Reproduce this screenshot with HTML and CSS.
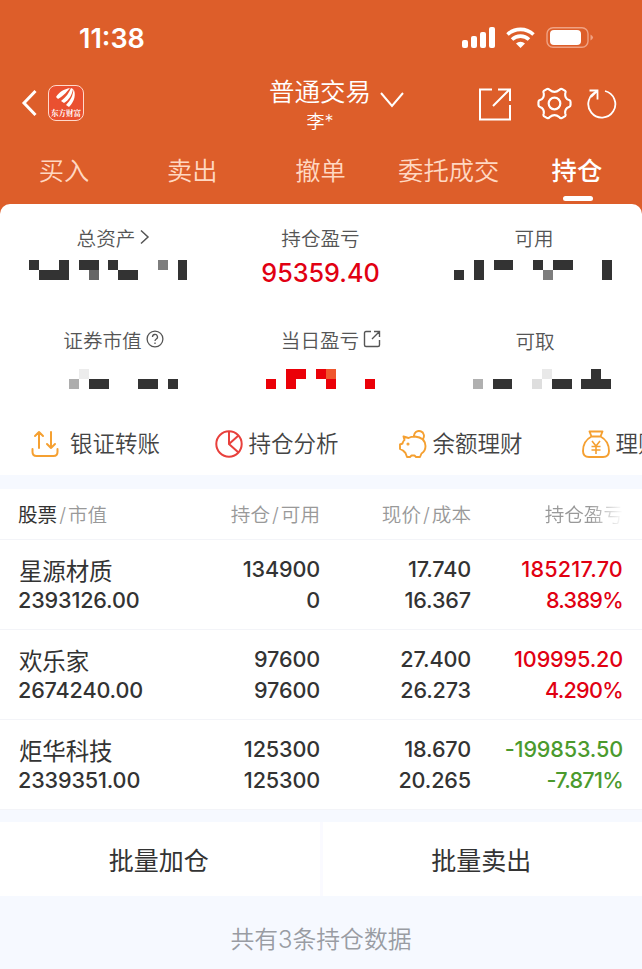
FILE: index.html
```html
<!DOCTYPE html>
<html lang="zh-CN">
<head>
  <meta charset="UTF-8" />
  <meta name="viewport" content="width=device-width, initial-scale=1.0" />
  <title>普通交易 - 持仓</title>
  <link rel="stylesheet" href="styles.css">
</head>
<body>
  <header class="header">
    <div class="status-bar">
      <span class="time">11:38</span>
      <svg class="status-icons" width="134" height="24" viewBox="0 0 134 24">
        <g fill="#fff">
          <rect x="2" y="13" width="6" height="8" rx="2"/>
          <rect x="11" y="9" width="6" height="12" rx="2"/>
          <rect x="20" y="5" width="6" height="16" rx="2"/>
          <rect x="29" y="0" width="6" height="21" rx="2"/>
          <path d="M60.500 21l-4.500-4.500a6.500 6.500 0 0 1 9 0z"/>
          <rect x="90" y="3" width="31" height="15" rx="4"/>
        </g>
        <path d="M47.500 7.500a19 19 0 0 1 26 0M52 12.500a12.500 12.500 0 0 1 17 0" fill="none" stroke="#fff" stroke-width="3.600"/>
        <rect x="87" y="0.700" width="41" height="19.600" rx="6" fill="none" stroke="#f0a283" stroke-width="1.400"/>
        <path d="M130.500 7.500q5 3 0 6z" fill="#f0a283"/>
      </svg>
    </div>

    <div class="nav-bar">
      <div class="nav-left">
        <svg width="18" height="28" viewBox="0 0 18 28"><path d="M15.500 2L4 14l11.500 12" fill="none" stroke="#fff" stroke-width="3"/></svg>
        <div class="logo">
          <svg width="20" height="19" viewBox="0 0 20 19" fill="#fff">
            <path d="M0 9C3 4 8 1 14 0 11 3 9 7 2 11z"/>
            <path d="M5 13C10 9 13 5 15 0l2 1C16 7 13 12 8 15z"/>
            <path d="M10 17C15 12 17 7 17.500 1 20 6 19 13 13 19z"/>
          </svg>
          <span class="logo-text">东方财富</span>
        </div>
      </div>
      <div class="nav-title">
        <div class="title">普通交易</div>
        <div class="account">李*</div>
      </div>
      <svg class="title-arrow" width="26" height="18" viewBox="0 0 26 18"><path d="M2 2l11 13L24 2" fill="none" stroke="#fff" stroke-width="2"/></svg>
      <div class="nav-right">
        <svg width="34" height="34" viewBox="0 0 34 34" fill="none" stroke="#fff" stroke-width="2"><path d="M14 2.500H2v30h30V18M15 19L31 3M20 2.500h12V14"/></svg>
        <svg class="gear" width="35" height="35" viewBox="0 0 36 36" fill="none" stroke="#fff" stroke-width="2.200" stroke-linejoin="round">
          <path d="M10.500 3Q12 2.500 13 4 18 8 23 4 24 2.500 25.500 3L29 5Q30 6 29 8 28.500 13 33 14.500 34.500 15 34.500 16.500V19.500Q34.500 21 33 21.500 28.500 23 29 28 30 30 29 31L25.500 33Q24 33.500 23 32 18 28 13 32 12 33.500 10.500 33L7 31Q6 30 7 28 7.500 23 3 21.500 1.500 21 1.500 19.500V16.500Q1.500 15 3 14.500 7.500 13 7 8 6 6 7 5z"/>
          <circle cx="18" cy="18" r="6"/>
        </svg>
        <svg width="32" height="32" viewBox="0 0 32 32" fill="none" stroke="#fff" stroke-width="1.800"><path d="M19 3A13.500 13.500 0 1 1 11 3.500M3.500 2.500H11.500v9M11 3l-6 6"/></svg>
      </div>
    </div>

    <nav class="tabs">
      <a class="tab">买入</a>
      <a class="tab">卖出</a>
      <a class="tab">撤单</a>
      <a class="tab">委托成交</a>
      <a class="tab active">持仓</a>
    </nav>
  </header>

  <section class="summary">
    <div class="summary-grid">
      <div class="cell">
        <div class="label assets">总资产<svg width="11" height="16" viewBox="0 0 11 16"><path d="M2 1.500l7 6.500-7 6.500" fill="none" stroke="#555" stroke-width="1.500"/></svg></div>
        <svg class="mosaic" width="158" height="20" viewBox="0 0 158 20" fill="#333">
          <path d="M0 0h10v10h20V0h10v20H10V10H0zM50 0h20v10H50zM79 0h10v10h20v10H89V10H79zM149 0h9v20h-9z"/>
          <path d="M60 10h10v10H60z" fill="#666"/><path d="M129 0h10v10h-10z" fill="#7d7d7d"/>
        </svg>
      </div>
      <div class="cell">
        <div class="label">持仓盈亏</div>
        <div class="value up">95359.40</div>
      </div>
      <div class="cell">
        <div class="label">可用</div>
        <svg class="mosaic shift-available" width="160" height="20" viewBox="0 0 160 20" fill="#333">
          <path d="M0 10h10v10H0zM20 0h10v20H20zM40 0h19v10H40zM79 0h10v10H79zM99 0h20v10H99zM148 0h10v20h-10z"/>
          <path d="M89 10h10v10H89z" fill="#7d7d7d"/>
        </svg>
      </div>
      <div class="cell second">
        <div class="label market">证券市值<svg width="18" height="18" viewBox="0 0 18 18" fill="none" stroke="#555" stroke-width="1.300"><circle cx="9" cy="9" r="7.900"/><path d="M6.500 7a2.500 2.500 0 1 1 3.600 2.200Q9 9.800 9 11M9 12.500V14"/></svg></div>
        <svg class="mosaic shift-market" width="109" height="20" viewBox="0 0 109 20" fill="#333">
          <path d="M20 10h20v10H20zM69 10h20v10H69zM99 10h10v10H99z"/>
          <path d="M0 10h10v10H0z" fill="#adadad"/><path d="M10 0h10v10H10z" fill="#ececec"/>
        </svg>
      </div>
      <div class="cell second">
        <div class="label today">当日盈亏<svg width="18" height="18" viewBox="0 0 18 18" fill="none" stroke="#555" stroke-width="1.400"><path d="M8 1.500H3Q1.500 1.500 1.500 3v12Q1.500 16.500 3 16.500h12q1.500 0 1.500-1.500v-5M9 9l7-7M11 1.500h5.500V7"/></svg></div>
        <svg class="mosaic" width="110" height="20" viewBox="0 0 110 20" fill="#eb0008">
          <path d="M0 10h10v10H0zM20 0h20v10H30v10H20zM50 0h10v10h10v10H60V10H50zM99 10h10v10H99z"/>
          <path d="M60 0h10v10H60z" fill="#f0562d"/>
        </svg>
      </div>
      <div class="cell second">
        <div class="label low">可取</div>
        <svg class="mosaic shift-cash" width="138" height="20" viewBox="0 0 138 20" fill="#333">
          <path d="M20 10h19v10H20zM79 10h20v10H79zM108 10h10V0h10v10h10v10h-30z"/>
          <path d="M0 10h10v10H0z" fill="#b0b0b0"/><path d="M59 10h10v10H59z" fill="#dedede"/><path d="M69 0h10v10H69z" fill="#e9e9e9"/>
        </svg>
      </div>
    </div>

    <div class="shortcuts">
      <a class="shortcut transfer">
        <svg width="28" height="28" viewBox="0 0 28 28" fill="none" stroke="#f5a031" stroke-width="2" stroke-linecap="round" stroke-linejoin="round"><path d="M1.500 19v3q0 4 4 4h17q4 0 4-4v-3M8 18V2M4 6l4-4 4 4M20 2v16M16 14l4 4 4-4"/></svg>
        银证转账
      </a>
      <a class="shortcut">
        <svg width="28" height="28" viewBox="0 0 28 28" fill="none" stroke="#e8403c" stroke-width="2"><circle cx="14" cy="14" r="12.700"/><path d="M14 1.500V14l9.500 8.500M14 14l9.500-8.500"/></svg>
        持仓分析
      </a>
      <a class="shortcut">
        <svg width="28" height="28" viewBox="0 0 28 28" fill="none" stroke="#f5a031" stroke-width="1.900" stroke-linejoin="round"><path d="M4.500 6.500l5 1.500Q12 6.500 16 6.500q10 1 10.500 9.500 0 5-4 7.500L21 27h-4l-1.500-1.500h-3L11 27H8l-1.500-4-2.500-2.500-3-1.500v-4.500l2.500-1Q4 11 5.500 10zM15 6.500a5 5 0 1 1 8.500 3"/><circle cx="9" cy="14" r="0.600"/></svg>
        余额理财
      </a>
      <a class="shortcut">
        <svg width="28" height="28" viewBox="0 0 28 28" fill="none" stroke="#f5a031" stroke-width="1.900" stroke-linejoin="round"><path d="M7.500 1.500h13l-2 5h-9zM9.500 6.500Q1 11 1 21q0 6 6 6h14q6 0 6-6 0-10-8.500-14.500"/><path d="M10 11l4 5 4-5M9.500 16.500h9M9.500 20h9M14 16v8" stroke-width="1.600"/></svg>
        理财
      </a>
    </div>
  </section>

  <section class="positions">
    <div class="row row-head">
      <div><b>股票</b><i>/</i>市值</div>
      <div>持仓<i>/</i>可用</div>
      <div>现价<i>/</i>成本</div>
      <div class="fade">持仓盈亏</div>
    </div>
    <div class="row">
      <div><span class="name">星源材质</span><span>2393126.00</span></div>
      <div><span>134900</span><span>0</span></div>
      <div><span>17.740</span><span>16.367</span></div>
      <div class="up"><span class="profit">185217.70</span><span class="percent">8.389%</span></div>
    </div>
    <div class="row">
      <div><span class="name">欢乐家</span><span>2674240.00</span></div>
      <div><span>97600</span><span>97600</span></div>
      <div><span>27.400</span><span>26.273</span></div>
      <div class="up"><span>109995.20</span><span class="percent">4.290%</span></div>
    </div>
    <div class="row">
      <div><span class="name">炬华科技</span><span>2339351.00</span></div>
      <div><span>125300</span><span>125300</span></div>
      <div><span>18.670</span><span>20.265</span></div>
      <div class="down"><span>-199853.50</span><span class="percent">-7.871%</span></div>
    </div>
  </section>

  <div class="actions">
    <button class="action">批量加仓</button>
    <button class="action">批量卖出</button>
  </div>

  <footer class="footer">共有3条持仓数据</footer>
</body>
</html>
```
FILE: styles.css
```css
* {
  box-sizing: border-box;
}
body {
  margin: 0;
  background: #f6f9ff;
  color: #333;
  font-family: Inter, "Noto Sans CJK SC", sans-serif;
  overflow: hidden;
}
svg {
  display: block;
  flex: none;
}
.header {
  height: 214px;
  background: #dd5e2a;
  color: #fff;
}
.status-bar {
  display: flex;
  justify-content: space-between;
  height: 76px;
  padding: 27px 48px 0 79px;
}
.time {
  font-size: 27px;
  font-weight: 600;
  line-height: 23px;
}
.nav-bar {
  display: grid;
  grid-template-columns: 238px 124px 44px 1fr;
  height: 60px;
  padding-left: 20px;
}
.nav-left {
  display: flex;
  align-items: center;
  gap: 10px;
  height: 54px;
}
.logo {
  display: flex;
  flex-direction: column;
  align-items: center;
  width: 36px;
  height: 36px;
  padding-top: 2px;
  border: 1.5px solid #ffd9cb;
  border-radius: 8px;
  background: #ea5030;
}
.logo-text {
  font-family: "Noto Serif CJK SC", "Noto Sans CJK SC", serif;
  font-size: 7.5px;
  font-weight: 700;
  line-height: 11px;
  white-space: nowrap;
}
.nav-title {
  text-align: center;
}
.title {
  font-size: 25.5px;
  font-weight: 350;
  line-height: 31px;
}
.account {
  font-size: 18px;
  font-weight: 350;
  line-height: 30px;
}
.title-arrow {
  margin: 15px 0 0 -3px;
}
.nav-right {
  display: flex;
  align-items: center;
  height: 55px;
  padding-left: 52px;
}
.gear {
  margin: 0 14px 0 25px;
}
.tabs {
  display: grid;
  grid-template-columns: repeat(5, 1fr);
  width: 641px;
  height: 66px;
}
.tab {
  display: flex;
  flex-direction: column;
  align-items: center;
  padding-top: 17px;
  font-size: 25.3px;
  font-weight: 350;
  line-height: 36px;
  color: #ffd8c2;
}
.tab.active {
  font-weight: 500;
  color: #fff;
}
.tab.active::after {
  content: "";
  width: 30px;
  height: 5px;
  margin: 7px 0 0 2px;
  border-radius: 3px;
  background: #fff;
}
.summary {
  height: 271px;
  margin-top: -10px;
  border-radius: 10px 10px 0 0;
  background: #fff;
  overflow: hidden;
}
.summary-grid {
  display: grid;
  grid-template-columns: 215px 211px 216px;
  grid-template-rows: 102px 105px;
  padding-top: 19px;
}
.cell {
  display: flex;
  flex-direction: column;
  align-items: center;
}
.label {
  display: flex;
  align-items: center;
  gap: 4px;
  height: 28px;
  font-size: 19.6px;
  font-weight: 350;
  color: #555;
}
.label.assets {
  padding-left: 12px;
}
.label.market {
  padding-left: 12px;
}
.label.today {
  padding-left: 21px;
}
.label.low {
  padding: 3px 0 0 2px;
}
.mosaic {
  margin-top: 9px;
}
.second .mosaic {
  margin-top: 16px;
}
.shift-available {
  margin-left: -1px;
}
.shift-market {
  margin-left: 32px;
}
.shift-cash {
  margin-left: 16px;
}
.value {
  font-size: 25.2px;
  font-weight: 500;
  line-height: 44px;
}
.up {
  color: #e10012;
}
.down {
  color: #4b9a2d;
}
.shortcuts {
  display: grid;
  grid-template-columns: 184px 184px 183px 183px;
  padding-left: 31px;
}
.shortcut {
  display: flex;
  align-items: center;
  gap: 5.5px;
  height: 28px;
  font-size: 22.5px;
  font-weight: 350;
  line-height: 28px;
  color: #444;
  white-space: nowrap;
}
.shortcut.transfer {
  gap: 11px;
}
.positions {
  margin-top: 14px;
  background: #fff;
}
.row {
  display: grid;
  grid-template-columns: 160px 142px 151px 152px;
  height: 90px;
  padding: 14px 0 0 18px;
  border-bottom: 1px solid #f3f4f8;
  font-size: 21.6px;
  font-weight: 500;
  line-height: 31px;
  letter-spacing: -0.15px;
  text-align: right;
}
.row > :first-child {
  text-align: left;
}
.row span {
  display: block;
}
.row .name {
  position: relative;
  top: 2px;
  left: 1px;
  font-size: 23.5px;
  font-weight: 400;
}
.row .percent {
  letter-spacing: -0.7px;
}
.row .profit {
  letter-spacing: 0.2px;
}
.row-head {
  height: 51px;
  padding-top: 11px;
  font-size: 19.6px;
  font-weight: 350;
  letter-spacing: 0;
  color: #999;
}
.row-head b {
  font-weight: 400;
  color: #333;
}
.row-head i {
  margin: 0 2px;
  font-style: normal;
}
.fade {
  -webkit-mask-image: linear-gradient(to right, #000 78%, transparent 100%);
  mask-image: linear-gradient(to right, #000 78%, transparent 100%);
}
.actions {
  display: grid;
  grid-template-columns: 1fr 1fr;
  gap: 3px;
  height: 74px;
  margin-top: 12px;
  background: #fafaff;
}
.action {
  border: none;
  padding: 0 2px 0 0;
  background: #fff;
  color: #333;
  font-family: inherit;
  font-size: 25px;
}
.footer {
  padding-top: 26px;
  font-size: 23.8px;
  font-weight: 350;
  line-height: 36px;
  text-align: center;
  color: #999ca3;
}
```
